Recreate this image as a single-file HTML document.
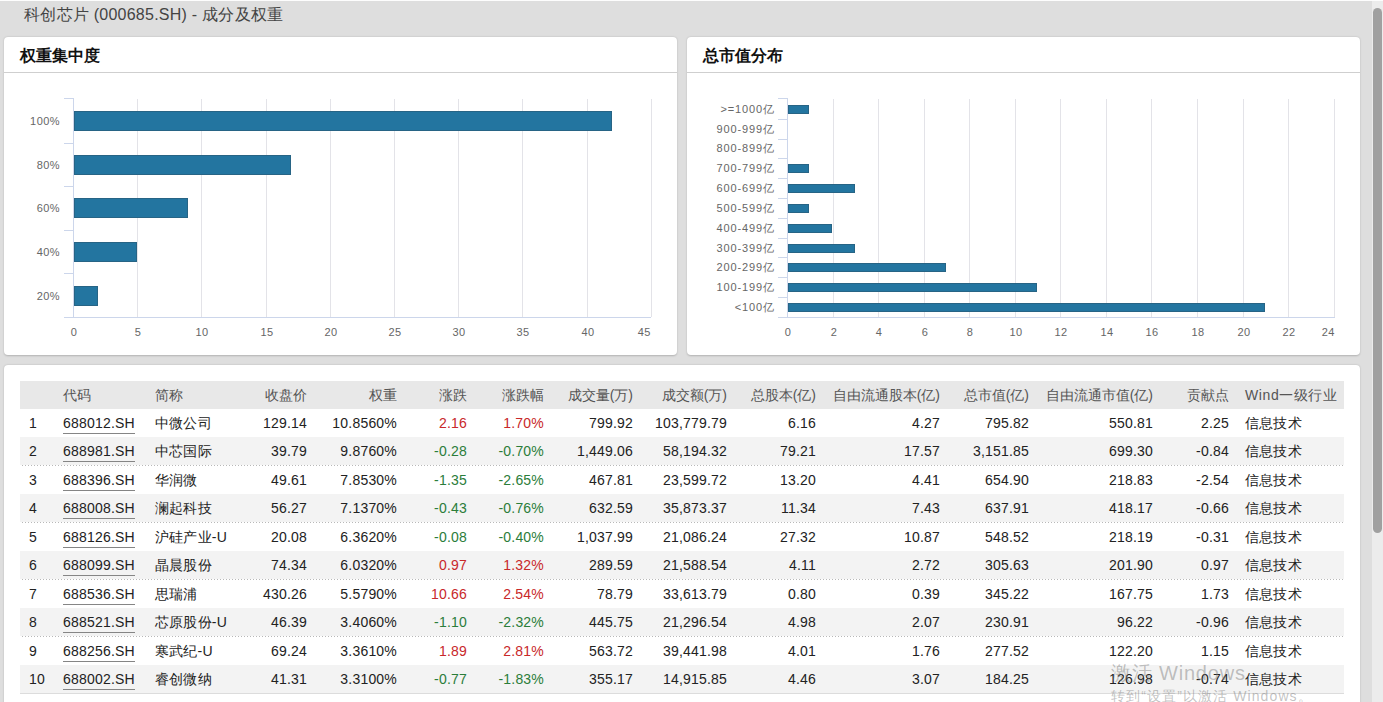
<!DOCTYPE html>
<html><head><meta charset="utf-8">
<style>
*{margin:0;padding:0;box-sizing:border-box}
html,body{width:1383px;height:702px;overflow:hidden}
body{background:#dedede;font-family:"Liberation Sans",sans-serif;position:relative}
.topline{position:absolute;left:0;top:0;width:1383px;height:1px;background:#fdfdfd;z-index:5}
.title{position:absolute;left:24px;top:3px;font-size:16px;line-height:24px;color:#444;white-space:nowrap;letter-spacing:0.25px}
.panel{position:absolute;background:#fff;border-radius:4px;box-shadow:0 0.5px 2px rgba(0,0,0,0.2)}
.ph{position:absolute;left:0;top:0;right:0;height:36px;border-bottom:1px solid #cfcfcf}
.pt{position:absolute;font-size:16px;font-weight:bold;color:#111;line-height:20px;white-space:nowrap}
svg{position:absolute;left:0;top:0}
svg text{font-family:"Liberation Sans",sans-serif;font-size:11px;fill:#666666}
.yl{letter-spacing:0.9px}
.xl{letter-spacing:0.5px}
.yl2{letter-spacing:0.45px}
.thead{position:absolute;left:20px;top:381px;width:1324px;height:28px;background:#e8e8e8}
.th{position:absolute;top:381px;line-height:28px;font-size:14px;color:#555;white-space:nowrap}
.r{text-align:right}
.rowbg{position:absolute;left:20px;width:1324px;height:28px;background:#f3f3f3}
.dot{position:absolute;left:20px;width:1324px;height:1px;background:repeating-linear-gradient(to right,transparent 0 2px,#b8b8b8 2px 3px)}
.solid{position:absolute;left:20px;width:1324px;height:1px;background:#dcdcdc}
.td{position:absolute;line-height:28px;font-size:14px;color:#222;white-space:nowrap;letter-spacing:0.2px}
.up{color:#c8282a}
.dn{color:#2b7d3a}
.code{display:inline-block;line-height:19px;border-bottom:1px solid #858585}
.sbtrack{position:absolute;left:1372px;top:0;width:11px;height:702px;background:#ececec}
.sbthumb{position:absolute;left:1373px;top:8px;width:9px;height:525px;background:#a0a0a0;border-radius:5px}
.wm1{position:absolute;left:1111px;top:660px;font-size:20px;letter-spacing:0.8px;color:rgba(120,120,120,0.45);white-space:nowrap}
.wm2{position:absolute;left:1111px;top:688px;font-size:14px;letter-spacing:1.1px;color:rgba(120,120,120,0.45);white-space:nowrap}
</style></head><body>
<div class="topline"></div>
<div class="title">科创芯片 (000685.SH) - 成分及权重</div>
<div class="panel" style="left:4px;top:37px;width:673px;height:318px"><div class="ph"></div><div class="pt" style="left:16px;top:9px">权重集中度</div></div>
<div class="panel" style="left:687px;top:37px;width:673px;height:318px"><div class="ph"></div><div class="pt" style="left:16px;top:9px">总市值分布</div></div>
<div class="panel" style="left:4px;top:365px;width:1356px;height:360px"></div>
<svg width="1383" height="360" viewBox="0 0 1383 360">
<line x1="137.5" y1="99" x2="137.5" y2="317" stroke="#e3e3e8" stroke-width="1"/>
<line x1="201.5" y1="99" x2="201.5" y2="317" stroke="#e3e3e8" stroke-width="1"/>
<line x1="266.5" y1="99" x2="266.5" y2="317" stroke="#e3e3e8" stroke-width="1"/>
<line x1="330.5" y1="99" x2="330.5" y2="317" stroke="#e3e3e8" stroke-width="1"/>
<line x1="394.5" y1="99" x2="394.5" y2="317" stroke="#e3e3e8" stroke-width="1"/>
<line x1="458.5" y1="99" x2="458.5" y2="317" stroke="#e3e3e8" stroke-width="1"/>
<line x1="522.5" y1="99" x2="522.5" y2="317" stroke="#e3e3e8" stroke-width="1"/>
<line x1="587.5" y1="99" x2="587.5" y2="317" stroke="#e3e3e8" stroke-width="1"/>
<line x1="651.5" y1="99" x2="651.5" y2="317" stroke="#e3e3e8" stroke-width="1"/>
<rect x="74.5" y="111.5" width="537" height="19" fill="#2375a0" stroke="#276485" stroke-width="1"/>
<text x="60" y="125" text-anchor="end" class="yl2">100%</text>
<rect x="74.5" y="155.5" width="216" height="19" fill="#2375a0" stroke="#276485" stroke-width="1"/>
<text x="60" y="169" text-anchor="end" class="yl2">80%</text>
<rect x="74.5" y="198.5" width="113" height="19" fill="#2375a0" stroke="#276485" stroke-width="1"/>
<text x="60" y="212" text-anchor="end" class="yl2">60%</text>
<rect x="74.5" y="242.5" width="62" height="19" fill="#2375a0" stroke="#276485" stroke-width="1"/>
<text x="60" y="256" text-anchor="end" class="yl2">40%</text>
<rect x="74.5" y="286.5" width="23" height="19" fill="#2375a0" stroke="#276485" stroke-width="1"/>
<text x="60" y="300" text-anchor="end" class="yl2">20%</text>
<line x1="73.5" y1="98" x2="73.5" y2="317" stroke="#ccd6eb" stroke-width="1"/>
<line x1="64" y1="98.5" x2="73.5" y2="98.5" stroke="#ccd6eb" stroke-width="1"/>
<line x1="64" y1="143.5" x2="73.5" y2="143.5" stroke="#ccd6eb" stroke-width="1"/>
<line x1="64" y1="186.5" x2="73.5" y2="186.5" stroke="#ccd6eb" stroke-width="1"/>
<line x1="64" y1="230.5" x2="73.5" y2="230.5" stroke="#ccd6eb" stroke-width="1"/>
<line x1="64" y1="273.5" x2="73.5" y2="273.5" stroke="#ccd6eb" stroke-width="1"/>
<line x1="64" y1="317.5" x2="651" y2="317.5" stroke="#ccd6eb" stroke-width="1"/>
<text x="74.1" y="336" text-anchor="middle" class="xl">0</text>
<text x="138.1" y="336" text-anchor="middle" class="xl">5</text>
<text x="202.1" y="336" text-anchor="middle" class="xl">10</text>
<text x="267.1" y="336" text-anchor="middle" class="xl">15</text>
<text x="331.1" y="336" text-anchor="middle" class="xl">20</text>
<text x="395.1" y="336" text-anchor="middle" class="xl">25</text>
<text x="459.1" y="336" text-anchor="middle" class="xl">30</text>
<text x="523.1" y="336" text-anchor="middle" class="xl">35</text>
<text x="588.1" y="336" text-anchor="middle" class="xl">40</text>
<text x="651" y="336" text-anchor="end" class="xl">45</text>
<line x1="833.5" y1="99" x2="833.5" y2="317" stroke="#e3e3e8" stroke-width="1"/>
<line x1="878.5" y1="99" x2="878.5" y2="317" stroke="#e3e3e8" stroke-width="1"/>
<line x1="924.5" y1="99" x2="924.5" y2="317" stroke="#e3e3e8" stroke-width="1"/>
<line x1="969.5" y1="99" x2="969.5" y2="317" stroke="#e3e3e8" stroke-width="1"/>
<line x1="1015.5" y1="99" x2="1015.5" y2="317" stroke="#e3e3e8" stroke-width="1"/>
<line x1="1060.5" y1="99" x2="1060.5" y2="317" stroke="#e3e3e8" stroke-width="1"/>
<line x1="1106.5" y1="99" x2="1106.5" y2="317" stroke="#e3e3e8" stroke-width="1"/>
<line x1="1151.5" y1="99" x2="1151.5" y2="317" stroke="#e3e3e8" stroke-width="1"/>
<line x1="1197.5" y1="99" x2="1197.5" y2="317" stroke="#e3e3e8" stroke-width="1"/>
<line x1="1243.5" y1="99" x2="1243.5" y2="317" stroke="#e3e3e8" stroke-width="1"/>
<line x1="1288.5" y1="99" x2="1288.5" y2="317" stroke="#e3e3e8" stroke-width="1"/>
<line x1="1334.5" y1="99" x2="1334.5" y2="317" stroke="#e3e3e8" stroke-width="1"/>
<rect x="788.5" y="105.5" width="20" height="8" fill="#2375a0" stroke="#276485" stroke-width="1"/>
<text x="775" y="113" text-anchor="end" class="yl">&gt;=1000亿</text>
<text x="775" y="133" text-anchor="end" class="yl">900-999亿</text>
<text x="775" y="152" text-anchor="end" class="yl">800-899亿</text>
<rect x="788.5" y="164.5" width="20" height="8" fill="#2375a0" stroke="#276485" stroke-width="1"/>
<text x="775" y="172" text-anchor="end" class="yl">700-799亿</text>
<rect x="788.5" y="184.5" width="66" height="8" fill="#2375a0" stroke="#276485" stroke-width="1"/>
<text x="775" y="192" text-anchor="end" class="yl">600-699亿</text>
<rect x="788.5" y="204.5" width="20" height="8" fill="#2375a0" stroke="#276485" stroke-width="1"/>
<text x="775" y="212" text-anchor="end" class="yl">500-599亿</text>
<rect x="788.5" y="224.5" width="43" height="8" fill="#2375a0" stroke="#276485" stroke-width="1"/>
<text x="775" y="232" text-anchor="end" class="yl">400-499亿</text>
<rect x="788.5" y="244.5" width="66" height="8" fill="#2375a0" stroke="#276485" stroke-width="1"/>
<text x="775" y="252" text-anchor="end" class="yl">300-399亿</text>
<rect x="788.5" y="263.5" width="157" height="8" fill="#2375a0" stroke="#276485" stroke-width="1"/>
<text x="775" y="271" text-anchor="end" class="yl">200-299亿</text>
<rect x="788.5" y="283.5" width="248" height="8" fill="#2375a0" stroke="#276485" stroke-width="1"/>
<text x="775" y="291" text-anchor="end" class="yl">100-199亿</text>
<rect x="788.5" y="303.5" width="476" height="8" fill="#2375a0" stroke="#276485" stroke-width="1"/>
<text x="775" y="311" text-anchor="end" class="yl">&lt;100亿</text>
<line x1="787.5" y1="98" x2="787.5" y2="317" stroke="#ccd6eb" stroke-width="1"/>
<line x1="778" y1="98.5" x2="787.5" y2="98.5" stroke="#ccd6eb" stroke-width="1"/>
<line x1="778" y1="119.5" x2="787.5" y2="119.5" stroke="#ccd6eb" stroke-width="1"/>
<line x1="778" y1="139.5" x2="787.5" y2="139.5" stroke="#ccd6eb" stroke-width="1"/>
<line x1="778" y1="158.5" x2="787.5" y2="158.5" stroke="#ccd6eb" stroke-width="1"/>
<line x1="778" y1="178.5" x2="787.5" y2="178.5" stroke="#ccd6eb" stroke-width="1"/>
<line x1="778" y1="198.5" x2="787.5" y2="198.5" stroke="#ccd6eb" stroke-width="1"/>
<line x1="778" y1="218.5" x2="787.5" y2="218.5" stroke="#ccd6eb" stroke-width="1"/>
<line x1="778" y1="238.5" x2="787.5" y2="238.5" stroke="#ccd6eb" stroke-width="1"/>
<line x1="778" y1="257.5" x2="787.5" y2="257.5" stroke="#ccd6eb" stroke-width="1"/>
<line x1="778" y1="277.5" x2="787.5" y2="277.5" stroke="#ccd6eb" stroke-width="1"/>
<line x1="778" y1="297.5" x2="787.5" y2="297.5" stroke="#ccd6eb" stroke-width="1"/>
<line x1="778" y1="317.5" x2="1335" y2="317.5" stroke="#ccd6eb" stroke-width="1"/>
<text x="788.1" y="336" text-anchor="middle" class="xl">0</text>
<text x="834.1" y="336" text-anchor="middle" class="xl">2</text>
<text x="879.1" y="336" text-anchor="middle" class="xl">4</text>
<text x="925.1" y="336" text-anchor="middle" class="xl">6</text>
<text x="970.1" y="336" text-anchor="middle" class="xl">8</text>
<text x="1016.1" y="336" text-anchor="middle" class="xl">10</text>
<text x="1061.1" y="336" text-anchor="middle" class="xl">12</text>
<text x="1107.1" y="336" text-anchor="middle" class="xl">14</text>
<text x="1152.1" y="336" text-anchor="middle" class="xl">16</text>
<text x="1198.1" y="336" text-anchor="middle" class="xl">18</text>
<text x="1244.1" y="336" text-anchor="middle" class="xl">20</text>
<text x="1289.1" y="336" text-anchor="middle" class="xl">22</text>
<text x="1335" y="336" text-anchor="end" class="xl">24</text>
</svg>
<div class="thead"></div>
<div class="th" style="left:63px">代码</div>
<div class="th" style="left:155px">简称</div>
<div class="th r" style="right:1076px">收盘价</div>
<div class="th r" style="right:986px">权重</div>
<div class="th r" style="right:916px">涨跌</div>
<div class="th r" style="right:839px">涨跌幅</div>
<div class="th r" style="right:750px">成交量(万)</div>
<div class="th r" style="right:656px">成交额(万)</div>
<div class="th r" style="right:567px">总股本(亿)</div>
<div class="th r" style="right:443px">自由流通股本(亿)</div>
<div class="th r" style="right:354px">总市值(亿)</div>
<div class="th r" style="right:230px">自由流通市值(亿)</div>
<div class="th r" style="right:154px">贡献点</div>
<div class="th" style="left:1245px;letter-spacing:0.6px">Wind一级行业</div>
<div class="td" style="left:29px;top:409px">1</div>
<div class="td" style="left:63px;top:409px"><span class="code">688012.SH</span></div>
<div class="td" style="left:155px;top:409px">中微公司</div>
<div class="td r" style="right:1076px;top:409px">129.14</div>
<div class="td r" style="right:986px;top:409px">10.8560%</div>
<div class="td up r" style="right:916px;top:409px">2.16</div>
<div class="td up r" style="right:839px;top:409px">1.70%</div>
<div class="td r" style="right:750px;top:409px">799.92</div>
<div class="td r" style="right:656px;top:409px">103,779.79</div>
<div class="td r" style="right:567px;top:409px">6.16</div>
<div class="td r" style="right:443px;top:409px">4.27</div>
<div class="td r" style="right:354px;top:409px">795.82</div>
<div class="td r" style="right:230px;top:409px">550.81</div>
<div class="td r" style="right:154px;top:409px">2.25</div>
<div class="td" style="left:1245px;top:409px">信息技术</div>
<div class="rowbg" style="top:437px"></div>
<div class="td" style="left:29px;top:437px">2</div>
<div class="td" style="left:63px;top:437px"><span class="code">688981.SH</span></div>
<div class="td" style="left:155px;top:437px">中芯国际</div>
<div class="td r" style="right:1076px;top:437px">39.79</div>
<div class="td r" style="right:986px;top:437px">9.8760%</div>
<div class="td dn r" style="right:916px;top:437px">-0.28</div>
<div class="td dn r" style="right:839px;top:437px">-0.70%</div>
<div class="td r" style="right:750px;top:437px">1,449.06</div>
<div class="td r" style="right:656px;top:437px">58,194.32</div>
<div class="td r" style="right:567px;top:437px">79.21</div>
<div class="td r" style="right:443px;top:437px">17.57</div>
<div class="td r" style="right:354px;top:437px">3,151.85</div>
<div class="td r" style="right:230px;top:437px">699.30</div>
<div class="td r" style="right:154px;top:437px">-0.84</div>
<div class="td" style="left:1245px;top:437px">信息技术</div>
<div class="dot" style="top:465px"></div>
<div class="td" style="left:29px;top:466px">3</div>
<div class="td" style="left:63px;top:466px"><span class="code">688396.SH</span></div>
<div class="td" style="left:155px;top:466px">华润微</div>
<div class="td r" style="right:1076px;top:466px">49.61</div>
<div class="td r" style="right:986px;top:466px">7.8530%</div>
<div class="td dn r" style="right:916px;top:466px">-1.35</div>
<div class="td dn r" style="right:839px;top:466px">-2.65%</div>
<div class="td r" style="right:750px;top:466px">467.81</div>
<div class="td r" style="right:656px;top:466px">23,599.72</div>
<div class="td r" style="right:567px;top:466px">13.20</div>
<div class="td r" style="right:443px;top:466px">4.41</div>
<div class="td r" style="right:354px;top:466px">654.90</div>
<div class="td r" style="right:230px;top:466px">218.83</div>
<div class="td r" style="right:154px;top:466px">-2.54</div>
<div class="td" style="left:1245px;top:466px">信息技术</div>
<div class="rowbg" style="top:494px"></div>
<div class="td" style="left:29px;top:494px">4</div>
<div class="td" style="left:63px;top:494px"><span class="code">688008.SH</span></div>
<div class="td" style="left:155px;top:494px">澜起科技</div>
<div class="td r" style="right:1076px;top:494px">56.27</div>
<div class="td r" style="right:986px;top:494px">7.1370%</div>
<div class="td dn r" style="right:916px;top:494px">-0.43</div>
<div class="td dn r" style="right:839px;top:494px">-0.76%</div>
<div class="td r" style="right:750px;top:494px">632.59</div>
<div class="td r" style="right:656px;top:494px">35,873.37</div>
<div class="td r" style="right:567px;top:494px">11.34</div>
<div class="td r" style="right:443px;top:494px">7.43</div>
<div class="td r" style="right:354px;top:494px">637.91</div>
<div class="td r" style="right:230px;top:494px">418.17</div>
<div class="td r" style="right:154px;top:494px">-0.66</div>
<div class="td" style="left:1245px;top:494px">信息技术</div>
<div class="dot" style="top:522px"></div>
<div class="td" style="left:29px;top:523px">5</div>
<div class="td" style="left:63px;top:523px"><span class="code">688126.SH</span></div>
<div class="td" style="left:155px;top:523px">沪硅产业-U</div>
<div class="td r" style="right:1076px;top:523px">20.08</div>
<div class="td r" style="right:986px;top:523px">6.3620%</div>
<div class="td dn r" style="right:916px;top:523px">-0.08</div>
<div class="td dn r" style="right:839px;top:523px">-0.40%</div>
<div class="td r" style="right:750px;top:523px">1,037.99</div>
<div class="td r" style="right:656px;top:523px">21,086.24</div>
<div class="td r" style="right:567px;top:523px">27.32</div>
<div class="td r" style="right:443px;top:523px">10.87</div>
<div class="td r" style="right:354px;top:523px">548.52</div>
<div class="td r" style="right:230px;top:523px">218.19</div>
<div class="td r" style="right:154px;top:523px">-0.31</div>
<div class="td" style="left:1245px;top:523px">信息技术</div>
<div class="rowbg" style="top:551px"></div>
<div class="td" style="left:29px;top:551px">6</div>
<div class="td" style="left:63px;top:551px"><span class="code">688099.SH</span></div>
<div class="td" style="left:155px;top:551px">晶晨股份</div>
<div class="td r" style="right:1076px;top:551px">74.34</div>
<div class="td r" style="right:986px;top:551px">6.0320%</div>
<div class="td up r" style="right:916px;top:551px">0.97</div>
<div class="td up r" style="right:839px;top:551px">1.32%</div>
<div class="td r" style="right:750px;top:551px">289.59</div>
<div class="td r" style="right:656px;top:551px">21,588.54</div>
<div class="td r" style="right:567px;top:551px">4.11</div>
<div class="td r" style="right:443px;top:551px">2.72</div>
<div class="td r" style="right:354px;top:551px">305.63</div>
<div class="td r" style="right:230px;top:551px">201.90</div>
<div class="td r" style="right:154px;top:551px">0.97</div>
<div class="td" style="left:1245px;top:551px">信息技术</div>
<div class="dot" style="top:579px"></div>
<div class="td" style="left:29px;top:580px">7</div>
<div class="td" style="left:63px;top:580px"><span class="code">688536.SH</span></div>
<div class="td" style="left:155px;top:580px">思瑞浦</div>
<div class="td r" style="right:1076px;top:580px">430.26</div>
<div class="td r" style="right:986px;top:580px">5.5790%</div>
<div class="td up r" style="right:916px;top:580px">10.66</div>
<div class="td up r" style="right:839px;top:580px">2.54%</div>
<div class="td r" style="right:750px;top:580px">78.79</div>
<div class="td r" style="right:656px;top:580px">33,613.79</div>
<div class="td r" style="right:567px;top:580px">0.80</div>
<div class="td r" style="right:443px;top:580px">0.39</div>
<div class="td r" style="right:354px;top:580px">345.22</div>
<div class="td r" style="right:230px;top:580px">167.75</div>
<div class="td r" style="right:154px;top:580px">1.73</div>
<div class="td" style="left:1245px;top:580px">信息技术</div>
<div class="rowbg" style="top:608px"></div>
<div class="td" style="left:29px;top:608px">8</div>
<div class="td" style="left:63px;top:608px"><span class="code">688521.SH</span></div>
<div class="td" style="left:155px;top:608px">芯原股份-U</div>
<div class="td r" style="right:1076px;top:608px">46.39</div>
<div class="td r" style="right:986px;top:608px">3.4060%</div>
<div class="td dn r" style="right:916px;top:608px">-1.10</div>
<div class="td dn r" style="right:839px;top:608px">-2.32%</div>
<div class="td r" style="right:750px;top:608px">445.75</div>
<div class="td r" style="right:656px;top:608px">21,296.54</div>
<div class="td r" style="right:567px;top:608px">4.98</div>
<div class="td r" style="right:443px;top:608px">2.07</div>
<div class="td r" style="right:354px;top:608px">230.91</div>
<div class="td r" style="right:230px;top:608px">96.22</div>
<div class="td r" style="right:154px;top:608px">-0.96</div>
<div class="td" style="left:1245px;top:608px">信息技术</div>
<div class="dot" style="top:636px"></div>
<div class="td" style="left:29px;top:637px">9</div>
<div class="td" style="left:63px;top:637px"><span class="code">688256.SH</span></div>
<div class="td" style="left:155px;top:637px">寒武纪-U</div>
<div class="td r" style="right:1076px;top:637px">69.24</div>
<div class="td r" style="right:986px;top:637px">3.3610%</div>
<div class="td up r" style="right:916px;top:637px">1.89</div>
<div class="td up r" style="right:839px;top:637px">2.81%</div>
<div class="td r" style="right:750px;top:637px">563.72</div>
<div class="td r" style="right:656px;top:637px">39,441.98</div>
<div class="td r" style="right:567px;top:637px">4.01</div>
<div class="td r" style="right:443px;top:637px">1.76</div>
<div class="td r" style="right:354px;top:637px">277.52</div>
<div class="td r" style="right:230px;top:637px">122.20</div>
<div class="td r" style="right:154px;top:637px">1.15</div>
<div class="td" style="left:1245px;top:637px">信息技术</div>
<div class="rowbg" style="top:665px"></div>
<div class="td" style="left:29px;top:665px">10</div>
<div class="td" style="left:63px;top:665px"><span class="code">688002.SH</span></div>
<div class="td" style="left:155px;top:665px">睿创微纳</div>
<div class="td r" style="right:1076px;top:665px">41.31</div>
<div class="td r" style="right:986px;top:665px">3.3100%</div>
<div class="td dn r" style="right:916px;top:665px">-0.77</div>
<div class="td dn r" style="right:839px;top:665px">-1.83%</div>
<div class="td r" style="right:750px;top:665px">355.17</div>
<div class="td r" style="right:656px;top:665px">14,915.85</div>
<div class="td r" style="right:567px;top:665px">4.46</div>
<div class="td r" style="right:443px;top:665px">3.07</div>
<div class="td r" style="right:354px;top:665px">184.25</div>
<div class="td r" style="right:230px;top:665px">126.98</div>
<div class="td r" style="right:154px;top:665px">-0.74</div>
<div class="td" style="left:1245px;top:665px">信息技术</div>
<div class="solid" style="top:693px"></div>
<div class="sbtrack"></div><div class="sbthumb"></div>
<div class="wm1">激活 Windows</div>
<div class="wm2">转到“设置”以激活 Windows。</div>
</body></html>
